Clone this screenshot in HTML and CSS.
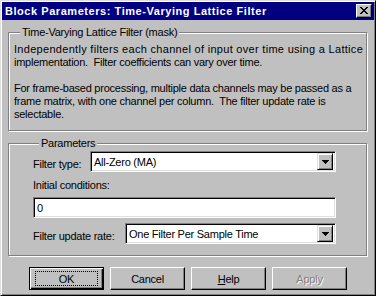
FILE: index.html
```html
<!DOCTYPE html>
<html>
<head>
<meta charset="utf-8">
<link rel="stylesheet" href="styles.css">
</head>
<body>
<div class="window">
  <div class="titlebar">
    <span class="title">Block Parameters: Time-Varying Lattice Filter</span>
    <span class="close-btn">
      <svg width="8" height="7" viewBox="0 0 8 7"><path d="M0 0h2v1h-2zM6 0h2v1h-2zM1 1h2v1h-2zM5 1h2v1h-2zM2 2h4v1h-4zM3 3h2v1h-2zM2 4h4v1h-4zM1 5h2v1h-2zM5 5h2v1h-2zM0 6h2v1h-2zM6 6h2v1h-2z" fill="#000"/></svg>
    </span>
  </div>
  <div class="content">
    <fieldset class="group group-desc">
      <legend class="legend">Time-Varying Lattice Filter (mask)</legend>
      <p class="desc"><span class="line-wide">Independently filters each channel of input over time using a Lattice</span><br>implementation.&nbsp; Filter coefficients can vary over time.</p>
      <p class="desc">For frame-based processing, multiple data channels may be passed as a<br>frame matrix, with one channel per column.&nbsp; The filter update rate is<br>selectable.</p>
    </fieldset>
    <fieldset class="group group-params">
      <legend class="legend">Parameters</legend>
      <div class="row">
        <span class="label label-type">Filter type:</span>
        <div class="combo">
          <span class="combo-text">All-Zero (MA)</span>
          <span class="combo-arrow"><svg width="7" height="4" viewBox="0 0 7 4"><path d="M0 0h7v1h-1v1h-1v1h-1v1h-1v-1h-1v-1h-1v-1h-1z" fill="#000"/></svg></span>
        </div>
      </div>
      <div class="label label-block">Initial conditions:</div>
      <div class="edit"><span class="edit-text">0</span></div>
      <div class="row row-rate">
        <span class="label label-rate">Filter update rate:</span>
        <div class="combo">
          <span class="combo-text">One Filter Per Sample Time</span>
          <span class="combo-arrow"><svg width="7" height="4" viewBox="0 0 7 4"><path d="M0 0h7v1h-1v1h-1v1h-1v1h-1v-1h-1v-1h-1v-1h-1z" fill="#000"/></svg></span>
        </div>
      </div>
    </fieldset>
    <div class="buttons">
      <div class="btn btn-default"><span class="focus">OK</span></div>
      <div class="btn">Cancel</div>
      <div class="btn"><span><u>H</u>elp</span></div>
      <div class="btn btn-disabled">Apply</div>
    </div>
  </div>
</div>
</body>
</html>
```
FILE: styles.css
```css
html, body {
  margin: 0;
  padding: 0;
  background: #c0c0c0;
}
body {
  font-family: "Liberation Sans", Arial, sans-serif;
  font-size: 11px;
  letter-spacing: -0.25px;
  color: #000;
}
.window {
  width: 376px;
  height: 296px;
  box-sizing: border-box;
  background: #c0c0c0;
  border: 1px solid;
  border-color: #dfdfdf #000 #000 #dfdfdf;
  box-shadow: inset 1px 1px #fff, inset -1px -1px #808080;
  padding: 1px;
  display: flex;
  flex-direction: column;
}
.titlebar {
  height: 18px;
  background: #000080;
  color: #fff;
  display: flex;
  align-items: center;
  justify-content: space-between;
  padding: 0 2px 0 3px;
}
.title {
  font-weight: bold;
  font-size: 11px;
  letter-spacing: 0.55px;
  white-space: nowrap;
}
.close-btn {
  width: 16px;
  height: 14px;
  box-sizing: border-box;
  background: #c0c0c0;
  border: 1px solid;
  border-color: #fff #000 #000 #fff;
  box-shadow: inset -1px -1px #808080;
  display: flex;
  align-items: center;
  justify-content: center;
  padding: 0 1px 1px 0;
}
.close-btn svg { display: block; }
.content {
  padding: 6px 7px 0 6px;
  display: flex;
  flex-direction: column;
}
.group {
  margin: 0;
  border: 1px solid #808080;
  box-shadow: inset 1px 1px #fff, 1px 1px #fff;
  min-width: 0;
}
.legend {
  padding: 0 2px;
  margin-left: 6px;
  line-height: 13px;
  background: #c0c0c0;
}
.group-desc {
  padding: 4px 5px 6px 5px;
  height: 105px;
  box-sizing: border-box;
}
.desc {
  margin: 0 0 13px 0;
  line-height: 13px;
  white-space: nowrap;
}
.desc:last-child { margin-bottom: 0; }
.line-wide { letter-spacing: 0.3px; }
.group-params {
  margin-top: 6px;
  padding: 1px 30px 0 24px;
  height: 119px;
  box-sizing: border-box;
}
.row {
  display: flex;
  align-items: center;
}
.label {
  line-height: 13px;
  white-space: nowrap;
}
.label-type, .label-rate {
  flex: none;
  padding-top: 5px;
}
.label-type { width: 57px; }
.label-rate { width: 92px; }
.combo {
  flex: 1;
  height: 21px;
  box-sizing: border-box;
  background: #fff;
  border: 1px solid;
  border-color: #808080 #fff #fff #808080;
  box-shadow: inset 1px 1px #000, inset -1px -1px #dfdfdf;
  display: flex;
  align-items: center;
  padding: 2px;
}
.combo-text {
  flex: 1;
  padding-left: 1px;
  white-space: nowrap;
}
.combo-arrow {
  width: 16px;
  height: 17px;
  box-sizing: border-box;
  background: #c0c0c0;
  border: 1px solid;
  border-color: #dfdfdf #000 #000 #dfdfdf;
  box-shadow: inset 1px 1px #fff, inset -1px -1px #808080;
  display: flex;
  align-items: center;
  justify-content: center;
}
.combo-arrow svg { display: block; }
.label-block {
  margin-top: 7px;
}
.edit {
  margin-top: 5px;
  height: 21px;
  box-sizing: border-box;
  background: #fff;
  border: 1px solid;
  border-color: #808080 #fff #fff #808080;
  box-shadow: inset 1px 1px #000, inset -1px -1px #dfdfdf;
  display: flex;
  align-items: center;
  padding: 1px 3px 0;
}
.row-rate { margin-top: 5px; }
.buttons {
  display: flex;
  gap: 6px;
  padding-left: 21px;
  margin-top: 11px;
}
.btn {
  width: 75px;
  height: 23px;
  box-sizing: border-box;
  border: 1px solid;
  border-color: #fff #000 #000 #fff;
  box-shadow: inset -1px -1px #808080;
  display: flex;
  align-items: center;
  justify-content: center;
  white-space: nowrap;
}
.btn-default {
  border: 1px solid #000;
  box-shadow: inset 1px 1px #fff, inset -1px -1px #000, inset -2px -2px #808080;
}
.focus {
  width: 63px;
  height: 15px;
  box-sizing: border-box;
  border: 1px dotted #000;
  display: flex;
  align-items: center;
  justify-content: center;
}
.btn-disabled {
  color: #808080;
  text-shadow: 1px 1px #fff;
}
```
